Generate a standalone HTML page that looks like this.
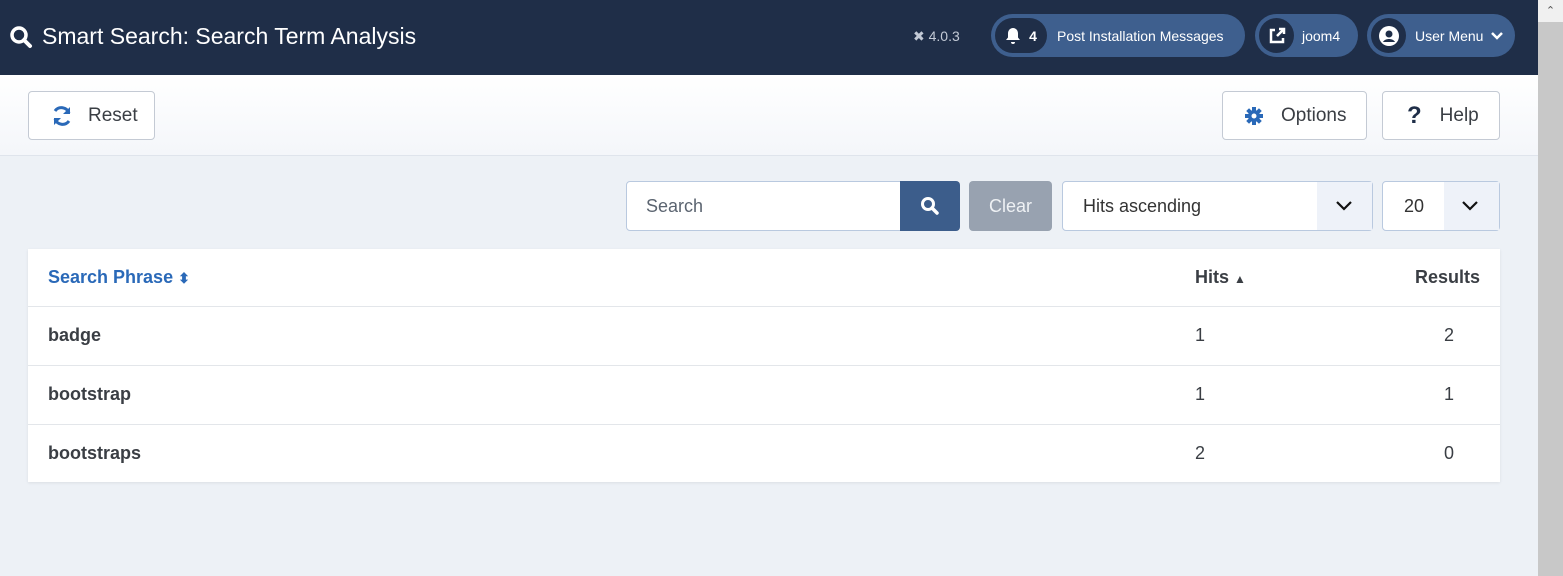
<!DOCTYPE html>
<html><head><style>
*{box-sizing:border-box;margin:0;padding:0}
body{width:1563px;height:576px;overflow:hidden;background:#edf1f6;font-family:"Liberation Sans",sans-serif;position:relative;color:#3a3e44}
.abs{position:absolute}
#hdr{left:0;top:0;width:1538px;height:75px;background:#1f2e48;color:#fff}
#tb{left:0;top:75px;width:1538px;height:81px;background:linear-gradient(#fff,#f4f6fa);border-bottom:1px solid #dfe4ec}
.btn{position:absolute;height:49px;background:#fff;border:1px solid #c4cad4;border-radius:4px;font-size:19px;color:#3a3e44;display:flex;align-items:center}
.pill{position:absolute;top:14px;height:43px;background:#3e5f8e;border-radius:22px;display:flex;align-items:center;color:#fff;font-size:14px}
.circ{width:35px;height:35px;border-radius:50%;background:#1f2e48;margin-left:4px;display:flex;align-items:center;justify-content:center}
#sb{left:1538px;top:0;width:25px;height:576px;background:#c8c8c8}
table{position:absolute;left:28px;top:249px;width:1472px;background:#fff;border-collapse:collapse;font-size:18px;box-shadow:0 1px 3px rgba(0,0,0,.08);table-layout:fixed}
td,th{height:59px;border-bottom:1px solid #e3e6ea;text-align:left;padding:0 20px}
th{font-weight:bold;height:57px}
tr:last-child td{border-bottom:none;height:58px}
</style></head><body>
<div id="hdr" class="abs">
 <svg class="abs" style="left:9px;top:25px" width="24" height="24" viewBox="0 0 24 24"><circle cx="10" cy="10" r="7" fill="none" stroke="#fff" stroke-width="3.5"/><path d="M15 15l6 6" stroke="#fff" stroke-width="4" stroke-linecap="round"/></svg>
 <div class="abs" style="left:42px;top:23px;font-size:23px">Smart Search: Search Term Analysis</div>
 <div class="abs" style="left:913px;top:28px;font-size:14px;color:#c3cad6">✖ 4.0.3</div>
 <div class="pill" style="left:991px;width:254px"><div class="circ" style="width:52px;border-radius:18px;justify-content:space-around;padding:0 6px"><svg width="16" height="18" viewBox="0 0 16 18"><path d="M8 1c-3 0-5 2.5-5 5.5v4L1 13h14l-2-2.5v-4C13 3.5 11 1 8 1zM6 15h4a2 2 0 0 1-4 0z" fill="#fff"/></svg><b style="font-size:14px">4</b></div><span style="margin-left:10px">Post Installation Messages</span></div>
 <div class="pill" style="left:1255px;width:103px"><div class="circ"><svg width="18" height="18" viewBox="0 0 18 18"><path d="M7 3H3v12h12v-4M9 9l7-7M11 2h5v5" fill="none" stroke="#fff" stroke-width="2.5"/></svg></div><span style="margin-left:8px">joom4</span></div>
 <div class="pill" style="left:1367px;width:148px"><div class="circ"><svg width="22" height="22" viewBox="0 0 22 22"><circle cx="11" cy="11" r="10" fill="#fff"/><circle cx="11" cy="9" r="3.5" fill="#1f2e48"/><path d="M5 17c2-4 10-4 12 0" fill="#1f2e48"/></svg></div><span style="margin-left:9px">User Menu</span><svg style="margin-left:8px" width="12" height="10" viewBox="0 0 12 10"><path d="M1 2l5 5 5-5" fill="none" stroke="#fff" stroke-width="2.5"/></svg></div>
</div>
<div id="tb" class="abs">
 <div class="btn" style="left:28px;top:16px;width:127px"><svg style="margin-left:22px" width="22" height="22" viewBox="0 0 22 22"><path d="M18 8A8 8 0 0 0 4 6M4 14a8 8 0 0 0 14 2" fill="none" stroke="#2a69b8" stroke-width="3"/><path d="M19 2v7h-7zM3 20v-7h7z" fill="#2a69b8"/></svg><span style="margin-left:15px">Reset</span></div>
 <div class="btn" style="left:1222px;top:16px;width:145px"><svg style="margin-left:22px" width="18" height="18" viewBox="0 0 18 18"><g fill="#2a69b8"><circle cx="9" cy="9" r="6"/><rect x="7" y="0" width="4" height="18"/><rect x="0" y="7" width="18" height="4"/><rect x="7" y="0" width="4" height="18" transform="rotate(45 9 9)"/><rect x="7" y="0" width="4" height="18" transform="rotate(-45 9 9)"/></g><circle cx="9" cy="9" r="2.5" fill="#fff"/></svg><span style="margin-left:18px">Options</span></div>
 <div class="btn" style="left:1382px;top:16px;width:118px"><b style="margin-left:24px;font-size:24px;color:#1f2e48">?</b><span style="margin-left:18px">Help</span></div>
</div>
<div class="abs" style="left:626px;top:181px;width:275px;height:50px;background:#fff;border:1px solid #b9c9df;border-radius:4px 0 0 4px;font-size:18px;color:#5b6470;padding:14px 19px">Search</div>
<div class="abs" style="left:900px;top:181px;width:60px;height:50px;background:#3c5d8b;border-radius:0 4px 4px 0"><svg style="margin:15px 0 0 20px" width="20" height="20" viewBox="0 0 20 20"><circle cx="8" cy="8" r="5.5" fill="none" stroke="#fff" stroke-width="3"/><path d="M12 12l5 5" stroke="#fff" stroke-width="3.5" stroke-linecap="round"/></svg></div>
<div class="abs" style="left:969px;top:181px;width:83px;height:50px;background:#98a2b0;border-radius:4px;color:#eef1f4;font-size:18px;text-align:center;line-height:50px">Clear</div>
<div class="abs" style="left:1062px;top:181px;width:311px;height:50px;background:#fff;border:1px solid #b9c9df;border-radius:4px;font-size:18px;color:#333;padding:14px 20px">Hits ascending<div class="abs" style="right:0;top:0;width:55px;height:48px;background:#eef2f9"><svg style="margin:18px 0 0 19px" width="16" height="12" viewBox="0 0 16 12"><path d="M1 2l7 7 7-7" fill="none" stroke="#111" stroke-width="2.2"/></svg></div></div>
<div class="abs" style="left:1382px;top:181px;width:118px;height:50px;background:#fff;border:1px solid #b9c9df;border-radius:4px;font-size:18px;color:#333;padding:14px 21px">20<div class="abs" style="right:0;top:0;width:55px;height:48px;background:#eef2f9"><svg style="margin:18px 0 0 18px" width="16" height="12" viewBox="0 0 16 12"><path d="M1 2l7 7 7-7" fill="none" stroke="#111" stroke-width="2.2"/></svg></div></div>
<table>
<colgroup><col><col style="width:205px"><col style="width:120px"></colgroup>
<tr><th style="color:#2a69b8">Search Phrase <span style="font-size:14px">⬍</span></th><th>Hits <span style="font-size:12px">▲</span></th><th style="text-align:right">Results</th></tr>
<tr><td><b>badge</b></td><td>1</td><td style="text-align:right;padding-right:46px">2</td></tr>
<tr><td><b>bootstrap</b></td><td>1</td><td style="text-align:right;padding-right:46px">1</td></tr>
<tr><td><b>bootstraps</b></td><td>2</td><td style="text-align:right;padding-right:46px">0</td></tr>
</table>
<div id="sb" class="abs"><div style="height:22px;background:#f0f0f0;text-align:center;font-size:11px;color:#555;padding-top:4px">⌃</div></div>
</body></html>
